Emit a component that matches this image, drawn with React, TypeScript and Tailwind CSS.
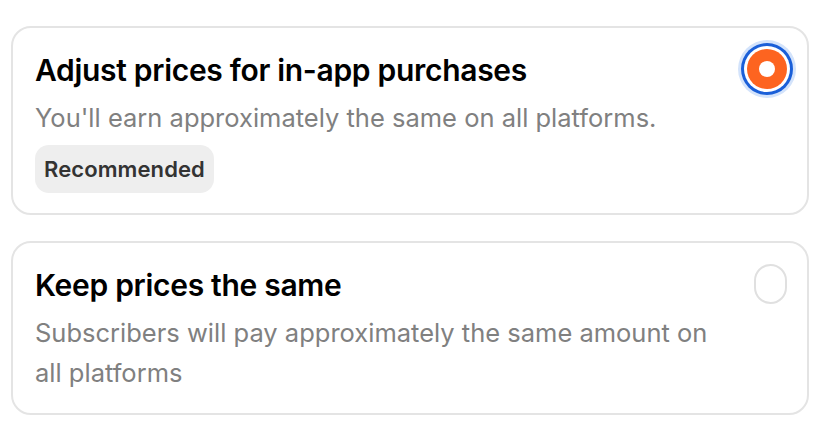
import { useState } from 'react'

type Option = {
  id: string
  title: string
  description: string
  badge?: string
}

const options: Option[] = [
  {
    id: 'adjust',
    title: 'Adjust prices for in-app purchases',
    description: "You'll earn approximately the same on all platforms.",
    badge: 'Recommended',
  },
  {
    id: 'keep',
    title: 'Keep prices the same',
    description: 'Subscribers will pay approximately the same amount on all platforms',
  },
]

function Radio({ checked }: { checked: boolean }) {
  if (checked) {
    return (
      <span className="w-10 h-10 flex items-center justify-center rounded-full bg-[#fd6420] shadow-[0_0_0_3px_#ffffff,0_0_0_6px_#1a5fd8,0_0_0_9px_#d3e3fb]">
        <span className="w-4 h-4 rounded-full bg-white" />
      </span>
    )
  }
  return (
    <span className="w-10 h-10 flex justify-end">
      <span className="w-[33px] h-10 rounded-full border-2 border-[#e0e0e0]" />
    </span>
  )
}

export default function App() {
  const [selected, setSelected] = useState('adjust')

  return (
    <div
      className="min-h-screen bg-white pl-[11px] pt-[26px]"
      style={{ fontFamily: 'Inter, "Noto Sans", sans-serif' }}
    >
      <div className="w-[798px] flex flex-col gap-[26px]">
        {options.map((opt) => (
          <button
            key={opt.id}
            onClick={() => setSelected(opt.id)}
            className="flex items-start gap-5 text-left rounded-[20px] border-2 border-[#e4e4e4] bg-white pl-[22px] pr-[20px] pt-[21px] pb-[20px]"
          >
            <div className="flex-1 flex flex-col items-start pt-[3px]">
              <h2 className="text-[30px] leading-[36px] font-semibold text-black tracking-[-0.3px]">
                {opt.title}
              </h2>
              <p className="mt-[10px] text-[25.5px] leading-[40px] text-[#808080]">
                {opt.description}
              </p>
              {opt.badge && (
                <span className="mt-[7px] h-12 px-[9px] flex items-center rounded-[14px] bg-[#eeeeee] text-[22px] font-semibold text-[#333] tracking-[0.1px]">
                  {opt.badge}
                </span>
              )}
            </div>
            <Radio checked={selected === opt.id} />
          </button>
        ))}
      </div>
    </div>
  )
}
